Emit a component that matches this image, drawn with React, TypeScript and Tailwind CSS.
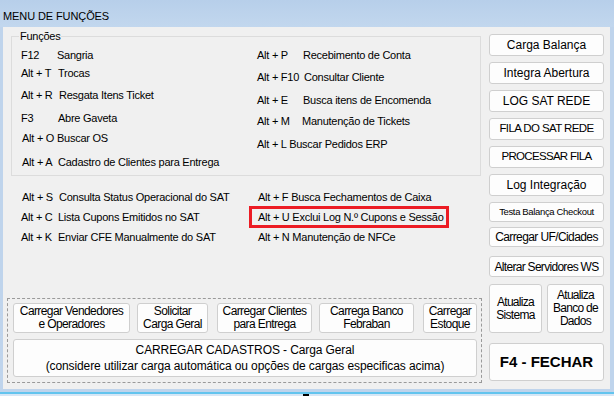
import React from 'react';

const groupLeft = [
    { k: 'F12', t: 'Sangria', w: 36, mt: 11 },
    { k: 'Alt + T', t: 'Trocas', w: 37, mt: 4 },
    { k: 'Alt + R', t: 'Resgata Itens Ticket', w: 38, mt: 8 },
    { k: 'F3', t: 'Abre Gaveta', w: 37, mt: 9 },
    { k: 'Alt + O Buscar OS', t: '', w: 0, mt: 6, pl: 1 },
    { k: 'Alt + A', t: 'Cadastro de Clientes para Entrega', w: 36, mt: 10, pl: 1 },
];

const groupRight = [
    { k: 'Alt + P', t: 'Recebimento de Conta', w: 46, mt: 11 },
    { k: 'Alt + F10', t: 'Consultar Cliente', w: 47, mt: 8 },
    { k: 'Alt + E', t: 'Busca itens de Encomenda', w: 46, mt: 9 },
    { k: 'Alt + M', t: 'Manutenção de Tickets', w: 45, mt: 7 },
    { k: 'Alt + L Buscar Pedidos ERP', t: '', w: 0, mt: 9 },
];

const btn = 'flex items-center justify-center text-center bg-[#fdfdfd] border border-[#cfcfcf] rounded-[3px] text-black';

function Row({ k, t, w, mt, pl = 0 }: { k: string; t: string; w: number; mt: number; pl?: number }) {
    return (
        <div className="flex h-[14px] leading-[14px] whitespace-nowrap" style={{ marginTop: mt, paddingLeft: pl }}>
            <span style={w ? { width: w } : undefined}>{k}</span>
            {t && <span>{t}</span>}
        </div>
    );
}

export default function App() {
    return (
        <div className="w-[614px] h-[396px] overflow-hidden bg-[#bfd4ec] font-['Liberation_Sans',Arial,sans-serif] text-black">
            {/* title bar */}
            <div className="h-[27px] pl-[3px] pt-[9px] text-[11px] leading-[14px] tracking-[-0.1px] bg-gradient-to-b from-[#b7cfea] to-[#c2d7ee]">
                MENU DE FUNÇÕES
            </div>

            <div className="ml-[3px] w-[607px] h-[362px] bg-[#f0f0f0] flex">
                {/* left part */}
                <div className="w-[481px] flex flex-col text-[11px] tracking-[-0.25px]">
                    <div className="relative ml-[8px] mt-[9px] w-[470px] h-[140px] border border-[#dcdcdc] flex">
                        <span className="absolute left-[7px] top-[-8px] px-[1px] bg-[#f0f0f0] leading-[14px]">Funções</span>
                        <div className="w-[245px] pl-[9px] flex flex-col">
                            {groupLeft.map((r, i) => <Row key={i} {...r} />)}
                        </div>
                        <div className="flex flex-col">
                            {groupRight.map((r, i) => <Row key={i} {...r} />)}
                        </div>
                    </div>

                    <div className="mt-[14px] flex">
                        <div className="w-[255px] pl-[18px] flex flex-col">
                            <Row k="Alt + S" t="Consulta Status Operacional do SAT" w={37} mt={0} pl={1} />
                            <Row k="Alt + C" t="Lista Cupons Emitidos no SAT" w={37} mt={6} />
                            <Row k="Alt + K" t="Enviar CFE Manualmente do SAT" w={37} mt={6} />
                        </div>
                        <div className="flex flex-col">
                            <Row k="Alt + F Busca Fechamentos de Caixa" t="" w={0} mt={0} />
                            <div className="relative mt-[6px] h-[14px] leading-[14px] whitespace-nowrap">
                                Alt + U Exclui Log N.º Cupons e Sessão
                                <span className="absolute left-[-9px] top-[-4px] w-[200px] h-[22px] border-[3px] border-[#ec1c24]" />
                            </div>
                            <Row k="Alt + N Manutenção de NFCe" t="" w={0} mt={6} />
                        </div>
                    </div>

                    <div className="mt-[54px] ml-[4px] w-[475px] h-[85px] border border-dashed border-[#9a9a9a] pt-[4px] pl-[5px] flex flex-col text-[12px] leading-[13px] tracking-[-0.6px]">
                        <div className="flex h-[30px]">
                            <div className={`${btn} w-[117px]`}>Carregar Vendedores<br />e Operadores</div>
                            <div className={`${btn} w-[71px] ml-[7px]`}>Solicitar<br />Carga Geral</div>
                            <div className={`${btn} w-[95px] ml-[9px]`}>Carregar Clientes<br />para Entrega</div>
                            <div className={`${btn} w-[95px] ml-[7px]`}>Carrega Banco<br />Febraban</div>
                            <div className={`${btn} w-[54px] ml-[9px]`}>Carregar<br />Estoque</div>
                        </div>
                        <div className={`${btn} mt-[6px] w-[464px] h-[38px] leading-[16px] tracking-[-0.1px]`}>
                            CARREGAR CADASTROS - Carga Geral<br />(considere utilizar carga automática ou opções de cargas especificas acima)
                        </div>
                    </div>
                </div>

                {/* right column */}
                <div className="ml-[5px] w-[115px] pt-[7px] flex flex-col text-[12px]">
                    <div className={`${btn} h-[22px]`}>Carga Balança</div>
                    <div className={`${btn} h-[22px] mt-[6px]`}>Integra Abertura</div>
                    <div className={`${btn} h-[22px] mt-[6px]`}>LOG SAT REDE</div>
                    <div className={`${btn} h-[22px] mt-[6px] text-[11.5px] tracking-[-0.6px]`}>FILA DO SAT REDE</div>
                    <div className={`${btn} h-[22px] mt-[6px] text-[11.5px] tracking-[-0.7px]`}>PROCESSAR FILA</div>
                    <div className={`${btn} h-[22px] mt-[6px]`}>Log Integração</div>
                    <div className={`${btn} h-[20px] mt-[6px] text-[9.5px] tracking-[-0.35px]`}>Testa Balança Checkout</div>
                    <div className={`${btn} h-[20px] mt-[5px] tracking-[-0.6px]`}>Carregar UF/Cidades</div>
                    <div className={`${btn} h-[21px] mt-[9px] tracking-[-0.7px]`}>Alterar Servidores WS</div>
                    <div className="flex mt-[7px] h-[49px] leading-[13px] tracking-[-0.7px]">
                        <div className={`${btn} w-[53px]`}>Atualiza<br />Sistema</div>
                        <div className={`${btn} w-[57px] ml-[5px]`}>Atualiza<br />Banco de<br />Dados</div>
                    </div>
                    <div className={`${btn} h-[38px] mt-[10px] text-[15px] font-bold`}>F4 - FECHAR</div>
                </div>
            </div>

            {/* bottom frame */}
            <div className="h-[7px] flex flex-col">
                <div className="h-[3px]" />
                <div className="h-[2px] bg-[#63c4ee]" />
                <div className="h-[2px] bg-[#d6e6f5] flex">
                    <div className="ml-[303px] w-[6px] h-[2px] bg-black" />
                </div>
            </div>
        </div>
    );
}
